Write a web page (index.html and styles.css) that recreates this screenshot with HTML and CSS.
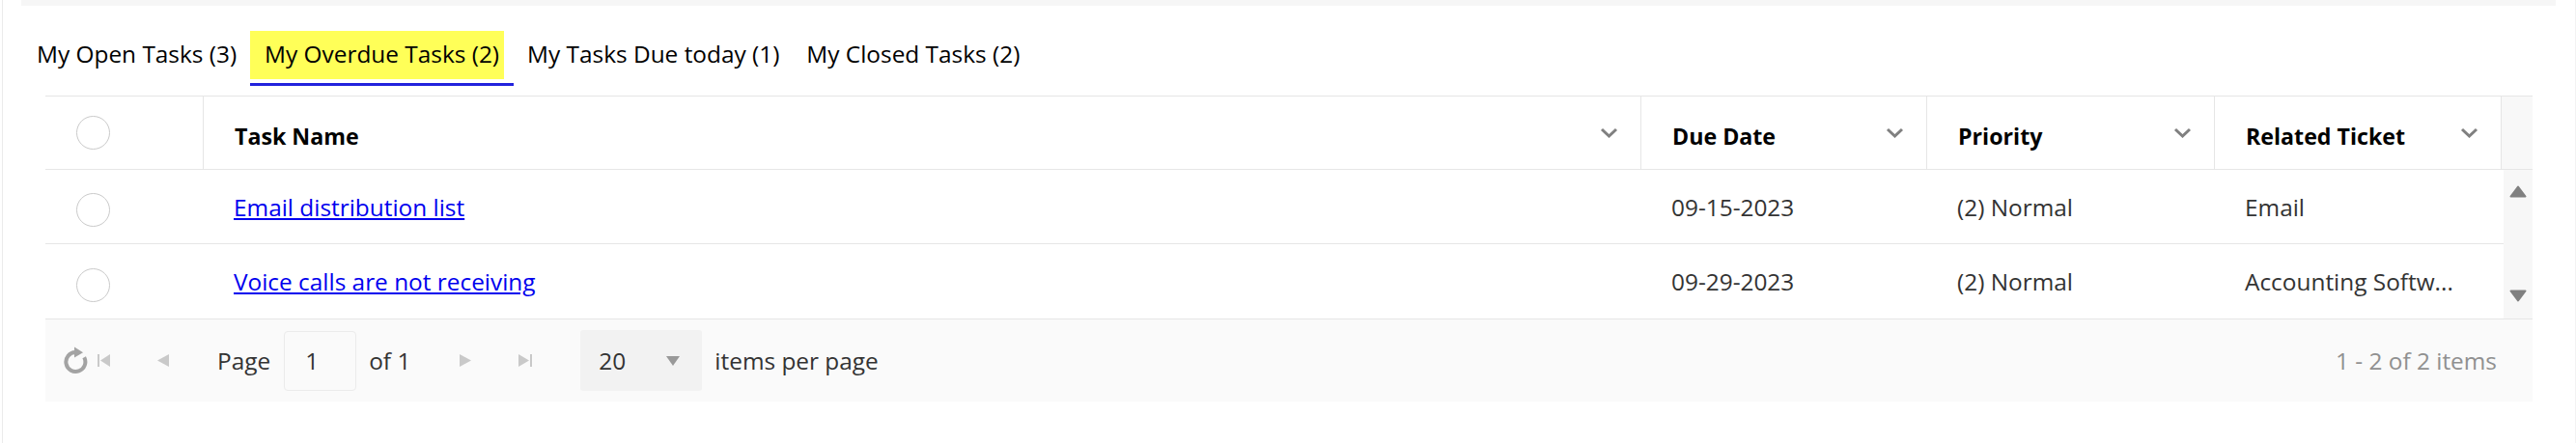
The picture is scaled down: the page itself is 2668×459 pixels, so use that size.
FILE: index.html
```html
<!DOCTYPE html>
<html lang="en">
<head>
<meta charset="utf-8">
<title>My Tasks</title>
<link rel="stylesheet" href="styles.css">
</head>
<body>
<div class="frame">
  <div class="topbar"></div>

  <ul class="tabs">
    <li class="tab"><span class="tab-label">My Open Tasks (3)</span></li>
    <li class="tab tab-active"><span class="tab-label">My Overdue Tasks (2)</span></li>
    <li class="tab"><span class="tab-label">My Tasks Due today (1)</span></li>
    <li class="tab"><span class="tab-label">My Closed Tasks (2)</span></li>
  </ul>

  <div class="grid">
    <div class="grid-head">
      <div class="hcell hcell-check"><span class="radio"></span></div>
      <div class="hcell"><span class="hlabel">Task Name</span><svg class="chev" viewBox="0 0 19 11"><polyline points="2,2 9.5,9 17,2"/></svg></div>
      <div class="hcell"><span class="hlabel">Due Date</span><svg class="chev" viewBox="0 0 19 11"><polyline points="2,2 9.5,9 17,2"/></svg></div>
      <div class="hcell"><span class="hlabel">Priority</span><svg class="chev" viewBox="0 0 19 11"><polyline points="2,2 9.5,9 17,2"/></svg></div>
      <div class="hcell"><span class="hlabel">Related Ticket</span><svg class="chev" viewBox="0 0 19 11"><polyline points="2,2 9.5,9 17,2"/></svg></div>
      <div class="hcell hcell-scroll"></div>
    </div>

    <div class="grid-body">
      <div class="rows">
        <div class="row">
          <div class="cell cell-check"><span class="radio radio-body"></span></div>
          <div class="cell"><a class="task-link" href="#">Email distribution list</a></div>
          <div class="cell">09-15-2023</div>
          <div class="cell">(2) Normal</div>
          <div class="cell cell-related"><span>Email</span></div>
        </div>
        <div class="row">
          <div class="cell cell-check"><span class="radio radio-body"></span></div>
          <div class="cell"><a class="task-link" href="#">Voice calls are not receiving</a></div>
          <div class="cell">09-29-2023</div>
          <div class="cell">(2) Normal</div>
          <div class="cell cell-related" title="Accounting Software"><span>Accounting Softw...</span></div>
        </div>
      </div>
      <div class="scrolltrack">
        <svg class="sarrow" viewBox="0 0 18 13"><polygon points="9,1.5 16.5,11.5 1.5,11.5"/></svg>
        <svg class="sarrow" viewBox="0 0 18 13"><polygon points="1.5,1.5 16.5,1.5 9,11.5"/></svg>
      </div>
    </div>

    <div class="pager">
      <div class="pager-left">
        <svg class="ico-refresh" viewBox="0 0 26 29">
          <path d="M22.2 11.3 A10 10 0 1 1 13 6" />
          <polygon points="12,0.5 21,6.2 12,11.5" />
        </svg>
        <svg class="ico-nav ico-first" viewBox="0 0 13 13"><rect x="0" y="0" width="2" height="13"/><polygon points="13,0 3,6.5 13,13"/></svg>
        <svg class="ico-nav ico-prev" viewBox="0 0 12 13"><polygon points="12,0 0,6.5 12,13"/></svg>
        <span class="pager-text pager-page">Page</span>
        <span class="page-input">1</span>
        <span class="pager-text pager-of">of 1</span>
        <svg class="ico-nav ico-next" viewBox="0 0 12 13"><polygon points="0,0 12,6.5 0,13"/></svg>
        <svg class="ico-nav ico-last" viewBox="0 0 14 13"><polygon points="0,0 11,6.5 0,13"/><rect x="12" y="0" width="2" height="13"/></svg>
        <span class="page-size"><span>20</span><svg class="dd-arrow" viewBox="0 0 14 10"><polygon points="0,0 14,0 7,10"/></svg></span>
        <span class="pager-text pager-items">items per page</span>
      </div>
      <span class="pager-info">1 - 2 of 2 items</span>
    </div>
  </div>
</div>
</body>
</html>
```
FILE: styles.css
```css
html, body {
  margin: 0;
  padding: 0;
  background: #ffffff;
}

body {
  font-family: "Open Sans", "Noto Sans", sans-serif;
  font-size: 24.4px;
  color: #000;
}

.frame {
  margin-left: 2px;
  height: 459px;
  box-sizing: border-box;
  border-left: 1px solid #ebebeb;
  border-right: 1px solid #f3f3f3;
}

.topbar {
  height: 6px;
  margin: 0 20px 0 19px;
  background: #f6f6f6;
}

/* Tabs */
.tabs {
  list-style: none;
  margin: 26px 0 0 0;
  padding: 0 0 0 21px;
  display: flex;
}

.tab {
  padding: 0 14px 4px 14px;
  border-bottom: 3px solid transparent;
}

.tab-label {
  display: block;
  height: 50px;
  line-height: 47px;
  padding-bottom: 3px;
  box-sizing: border-box;
  white-space: nowrap;
}

.tab-active {
  padding: 0 10px 4px 0;
  border-bottom-color: #2222dd;
}

.tab-active .tab-label {
  background: #ffff58;
  padding-left: 15px;
  padding-right: 5px;
}

/* Grid */
.grid {
  margin: 10px 44px 0 44px;
}

.grid-head {
  display: grid;
  grid-template-columns: 164px 1fr 296px 298px 297px 32px;
  height: 77px;
  box-sizing: border-box;
  border-top: 1px solid #e6e6e6;
  border-bottom: 1px solid #e6e6e6;
}

.hcell {
  display: flex;
  align-items: center;
  justify-content: space-between;
  padding: 0 23px 0 32px;
  border-right: 1px solid #e6e6e6;
  font-weight: 700;
  font-size: 23.2px;
  color: #000;
  min-width: 0;
}

.hlabel {
  padding-top: 7px;
  white-space: nowrap;
}

.hcell-check {
  padding: 0 0 0 32px;
  justify-content: flex-start;
}

.hcell-scroll {
  border-right: none;
  padding: 0;
  background: #f8f8f8;
}

.chev {
  width: 19px;
  height: 11px;
  flex: none;
}

.chev polyline {
  fill: none;
  stroke: #808080;
  stroke-width: 3;
}

.radio {
  display: block;
  width: 35px;
  height: 35px;
  box-sizing: border-box;
  border: 1px solid #cacaca;
  border-radius: 50%;
  background: #fff;
}

.radio-body {
  margin-top: 7px;
}

.grid-body {
  display: flex;
}

.rows {
  flex: 1;
  min-width: 0;
}

.row {
  display: grid;
  grid-template-columns: 164px 1fr 296px 298px 299px;
  height: 77px;
  box-sizing: border-box;
  border-bottom: 1px solid #e6e6e6;
}

.row:last-child {
  border-bottom: none;
}

.cell {
  display: flex;
  align-items: center;
  padding: 0 20px 0 31px;
  color: #333;
  white-space: nowrap;
  min-width: 0;
}

.cell-check {
  padding-left: 32px;
}

.cell-related {
  padding-right: 20px;
}

.task-link {
  color: #0000ee;
  text-decoration: underline;
}

.scrolltrack {
  width: 30px;
  flex: none;
  background: #f7f7f7;
  display: flex;
  flex-direction: column;
  justify-content: space-between;
  align-items: center;
  padding: 16px 0 17px 0;
}

.sarrow {
  width: 18px;
  height: 13px;
  display: block;
}

.sarrow polygon {
  fill: #808080;
  stroke: #808080;
  stroke-width: 2;
  stroke-linejoin: round;
}

/* Pager */
.pager {
  display: flex;
  align-items: center;
  justify-content: space-between;
  height: 86px;
  box-sizing: border-box;
  border-top: 1px solid #e6e6e6;
  background: #fafafa;
  padding: 0 37px 0 18px;
}

.pager-left {
  display: flex;
  align-items: center;
}

.ico-refresh {
  width: 26px;
  height: 29px;
  display: block;
}

.ico-refresh path {
  fill: none;
  stroke: #a3a3a3;
  stroke-width: 4;
}

.ico-refresh polygon {
  fill: #a3a3a3;
}

.ico-nav {
  display: block;
  height: 13px;
  fill: #c9c9c9;
}

.ico-first { width: 13px; margin-left: 10px; }
.ico-prev { width: 12px; margin-left: 49px; }
.ico-next { width: 12px; margin-left: 51px; }
.ico-last { width: 14px; margin-left: 49px; }

.pager-text {
  color: #333;
  white-space: nowrap;
}

.pager-page { margin-left: 50px; }
.pager-of { margin-left: 13px; }
.pager-items { margin-left: 13px; }

.page-input {
  margin-left: 14px;
  width: 75px;
  height: 62px;
  box-sizing: border-box;
  border: 1px solid #ebebeb;
  border-radius: 4px;
  background: #fafafa;
  color: #333;
  display: flex;
  align-items: center;
  padding-left: 21px;
}

.page-size {
  margin-left: 50px;
  width: 126px;
  height: 63px;
  box-sizing: border-box;
  background: #f2f2f2;
  border-radius: 3px;
  color: #333;
  display: flex;
  align-items: center;
  padding: 0 23px 0 19px;
}

.dd-arrow {
  width: 14px;
  height: 10px;
  margin-left: auto;
  fill: #999;
}

.pager-info {
  color: #909090;
  white-space: nowrap;
}
```
